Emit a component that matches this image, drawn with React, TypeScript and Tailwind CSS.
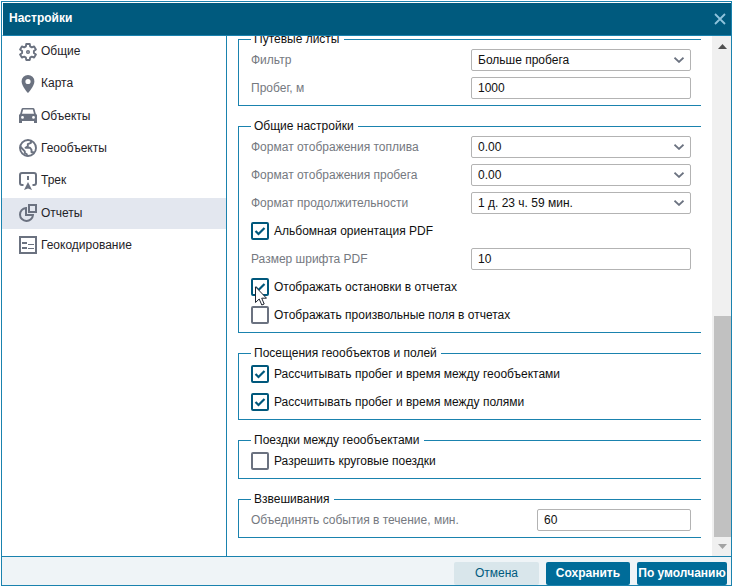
import React from 'react';

const GearIcon = () => (
  <svg viewBox="-9 -9 18 18" className="size-[18px] shrink-0" fill="none" stroke="currentColor" strokeWidth="1.900" strokeLinejoin="round">
    <path d="M-2.100-5.600-1.800-8H1.800L2.100-5.600 3.800-4.600 6.100-5.500 7.900-2.500 5.900-1V1L7.900 2.500 6.100 5.500 3.800 4.600 2.100 5.600 1.800 8H-1.800L-2.100 5.600-3.800 4.600-6.100 5.500-7.900 2.500-5.900 1V-1L-7.900-2.500-6.100-5.500-3.800-4.600Z" />
    <circle r="1.300" strokeWidth="1.500" />
  </svg>
);

const PinIcon = () => (
  <svg viewBox="0 0 18 18" className="size-[18px] shrink-0" fill="currentColor" fillRule="evenodd">
    <path d="M9 0a6.400 6.400 0 0 0-6.400 6.400C2.600 11 9 18 9 18s6.400-7 6.400-11.600A6.400 6.400 0 0 0 9 0Zm0 3.900a2.600 2.600 0 1 1 0 5.200 2.600 2.600 0 0 1 0-5.200Z" />
  </svg>
);

const CarIcon = () => (
  <svg viewBox="0 0 18 18" className="size-[18px] shrink-0" fill="currentColor" fillRule="evenodd">
    <path d="M4 1h10c.8 0 1.300.4 1.500 1.100L16.700 6.500 18 8v8h-3v-2H3v2H0V8l1.300-1.500L2.500 2.100C2.700 1.400 3.200 1 4 1Zm.2 1.600L3 6.700h12l-1.200-4.100ZM3.500 9a1.400 1.400 0 1 0 0 2.800 1.400 1.400 0 0 0 0-2.800Zm11 0a1.400 1.400 0 1 0 0 2.800 1.400 1.400 0 0 0 0-2.800Z" />
  </svg>
);

const GlobeIcon = () => (
  <svg viewBox="0 0 18 18" className="size-[18px] shrink-0" fill="none" stroke="currentColor" strokeWidth="1.900" strokeLinejoin="round">
    <circle cx="9" cy="9" r="8" />
    <path d="M12 1.500v2.300L8.800 5.200v2.200L6.500 8.800H11l1.500 2v2.400h1.800l1 1.200M1.200 7.500l4.600 4.800v1.700l2 1.200v2" />
  </svg>
);

const TrackIcon = () => (
  <svg viewBox="0 0 18 18" className="size-[18px] shrink-0" fill="none" stroke="currentColor" strokeWidth="2">
    <path d="M4.500 13H3a2 2 0 0 1-2-2V3a2 2 0 0 1 2-2h12a2 2 0 0 1 2 2v8a2 2 0 0 1-2 2h-1.500M9 4v4" />
    <path d="M9 10 13 18 9 16.600 5 18Z" fill="currentColor" stroke="none" />
  </svg>
);

const ReportIcon = () => (
  <svg viewBox="0 0 18 18" className="size-[18px] shrink-0" fill="none" stroke="currentColor" strokeWidth="2">
    <path d="M10 1h7v7h-7ZM7 4v7h7A6.500 6.500 0 1 1 7 4Z" />
  </svg>
);

const FormIcon = () => (
  <svg viewBox="0 0 18 18" className="size-[18px] shrink-0" fill="none" stroke="currentColor">
    <path d="M1 1h16v16H1Z" strokeWidth="2" />
    <path d="M3 7h5M3 12h5" strokeWidth="2" />
    <path d="M9 8.500h6M9 12.500h6" strokeWidth="1" />
  </svg>
);

const menu = [
  { icon: GearIcon, title: 'Общие' },
  { icon: PinIcon, title: 'Карта' },
  { icon: CarIcon, title: 'Объекты' },
  { icon: GlobeIcon, title: 'Геообъекты' },
  { icon: TrackIcon, title: 'Трек' },
  { icon: ReportIcon, title: 'Отчеты', active: true },
  { icon: FormIcon, title: 'Геокодирование' }
];

const Group = ({ title, children }: { title: string; children: React.ReactNode }) => (
  <fieldset className="min-w-0 border border-r-0 border-[#1a82ae] pl-3 pr-2.5 pb-[3px]">
    <legend className="pl-[3px] pr-1 leading-[13px]">{title}</legend>
    {children}
  </fieldset>
);

const SelectRow = ({ id, label, value }: { id: string; label: string; value: string }) => (
  <div className="flex h-7 items-center">
    <label htmlFor={id} className="flex-1 text-[#75797f]">{label}</label>
    <div className="relative w-1/2">
      <select id={id} className="block h-[22px] w-full appearance-none rounded-xs border border-[#b3b3b3] bg-white px-1.5">
        <option>{value}</option>
      </select>
      <svg viewBox="0 0 10 6" className="pointer-events-none absolute right-[7px] top-2 h-1.5 w-2.5" fill="none" stroke="#6b7280" strokeWidth="1.800">
        <path d="M.5.7 5 4.900 9.500.7" />
      </svg>
    </div>
  </div>
);

const InputRow = ({ id, label, value, short }: { id: string; label: string; value: string; short?: boolean }) => (
  <div className="flex h-7 items-center">
    <label htmlFor={id} className="flex-1 text-[#75797f]">{label}</label>
    <input
      id={id}
      type="text"
      defaultValue={value}
      className={`h-[22px] rounded-xs border border-[#b3b3b3] bg-white px-1.5 ${short ? 'w-[35%]' : 'w-1/2'}`}
    />
  </div>
);

const CheckRow = ({ label, checked, pointer }: { label: string; checked?: boolean; pointer?: boolean }) => (
  <div className="flex h-7 items-center">
    <label className="relative flex items-center gap-[5px]">
      <input
        type="checkbox"
        defaultChecked={checked}
        className="peer size-[18px] shrink-0 appearance-none rounded-xs border-2 border-[#6b7280] bg-white checked:border-[#00587c]"
      />
      <svg viewBox="0 0 18 18" className="pointer-events-none absolute left-0 top-1/2 hidden size-[18px] -translate-y-1/2 peer-checked:block" fill="none" stroke="#00587c" strokeWidth="2.200">
        <path d="M4.500 9 7.500 12 13.500 6" />
      </svg>
      {label}
      {/* Mouse pointer */}
      {pointer && (
        <svg viewBox="0 0 12 20" className="pointer-events-none absolute left-1 top-2 h-5 w-3" fill="#fff" stroke="#1f2430">
          <path d="M.5.8v15.700L4.200 13 6.800 19 9.200 18 6.700 12.200H11.500Z" />
        </svg>
      )}
    </label>
  </div>
);

const App = () => {
  return (
    <div className="h-screen bg-white px-px pt-px pb-0.5 font-['Liberation_Sans',Arial,sans-serif] text-xs text-[#101010]">
      <div className="flex h-full flex-col border border-[#1a82ae]">
        {/* Title bar */}
        <header className="flex h-[34px] shrink-0 items-center justify-between border-b border-l border-t border-b-[#1a82ae] border-l-white border-t-white bg-[#005a7e] pl-1.5 pr-1 text-white">
          <h1 className="pb-0.5 font-bold">Настройки</h1>
          <button type="button" aria-label="Закрыть" className="p-px">
            <svg viewBox="0 0 12 12" className="size-3" stroke="#8fc3dc" strokeWidth="1.800">
              <path d="m1 1 10 10M11 1 1 11" />
            </svg>
          </button>
        </header>

        <div className="flex min-h-0 flex-1">
          {/* Sections */}
          <nav className="w-[225px] shrink-0 border-r border-[#1a82ae]">
            <div className="flex h-[225px] flex-col justify-between">
              {menu.map((item) => (
                <button
                  key={item.title}
                  type="button"
                  className={`flex h-[31px] w-full items-center gap-1 pl-[17px] text-[#6b7280] ${item.active ? 'bg-[#e3e7ef]' : ''}`}
                >
                  <item.icon />
                  <span className="pb-px text-[#1f2328]">{item.title}</span>
                </button>
              ))}
            </div>
          </nav>

          {/* Settings */}
          <main className="flex min-w-0 flex-1 overflow-hidden">
            <div className="-mt-[3px] flex min-w-0 flex-1 flex-col gap-3.5 pl-[11px] pr-[11px]">
              <Group title="Путевые листы">
                <SelectRow id="filter" label="Фильтр" value="Больше пробега" />
                <InputRow id="mileage" label="Пробег, м" value="1000" />
              </Group>
              <Group title="Общие настройки">
                <SelectRow id="fuel-format" label="Формат отображения топлива" value="0.00" />
                <SelectRow id="mileage-format" label="Формат отображения пробега" value="0.00" />
                <SelectRow id="duration-format" label="Формат продолжительности" value="1 д. 23 ч. 59 мин." />
                <CheckRow label="Альбомная ориентация PDF" checked />
                <InputRow id="font-size" label="Размер шрифта PDF" value="10" />
                <CheckRow label="Отображать остановки в отчетах" checked pointer />
                <CheckRow label="Отображать произвольные поля в отчетах" />
              </Group>
              <Group title="Посещения геообъектов и полей">
                <CheckRow label="Рассчитывать пробег и время между геообъектами" checked />
                <CheckRow label="Рассчитывать пробег и время между полями" checked />
              </Group>
              <Group title="Поездки между геообъектами">
                <CheckRow label="Разрешить круговые поездки" />
              </Group>
              <Group title="Взвешивания">
                <InputRow id="merge" label="Объединять события в течение, мин." value="60" short />
              </Group>
            </div>

            {/* Scrollbar */}
            <div className="flex w-[19px] shrink-0 flex-col items-end bg-[#f0f0f0]">
              <svg viewBox="0 0 17 20" className="h-5 w-[17px] shrink-0" fill="#505050">
                <path d="M4 13h9L8.500 8Z" />
              </svg>
              <div className="flex w-[17px] flex-1 flex-col justify-end">
                <div className="h-[46%] bg-[#c1c1c1]"></div>
              </div>
              <svg viewBox="0 0 17 19" className="h-[19px] w-[17px] shrink-0" fill="#a3a3a3">
                <path d="M4 7h9l-4.500 5Z" />
              </svg>
            </div>
          </main>
        </div>

        {/* Actions */}
        <footer className="flex h-[29px] shrink-0 items-center justify-end gap-[7px] border-t border-[#1a82ae] bg-[#eff4f7] pt-1 pr-1">
          <button type="button" className="h-[23px] w-[85px] rounded-xs bg-[#d9e6eb] text-[#005a7e]">Отмена</button>
          <button type="button" className="h-[23px] w-[84px] rounded-xs bg-[#006c99] font-bold text-white">Сохранить</button>
          <button type="button" className="h-[23px] w-[90px] whitespace-nowrap rounded-xs bg-[#006c99] font-bold text-white">По умолчанию</button>
        </footer>
      </div>
    </div>
  );
};

export default App;
